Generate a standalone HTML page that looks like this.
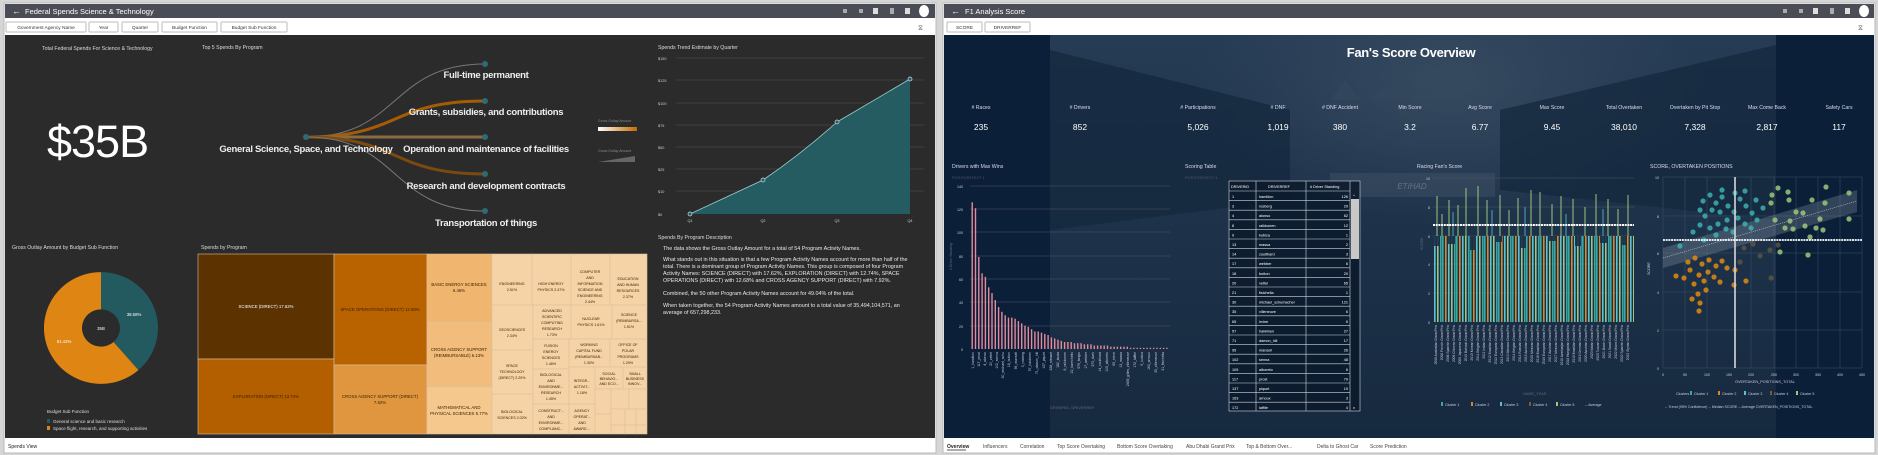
<!DOCTYPE html>
<html><head><meta charset="utf-8"><style>
html,body{margin:0;padding:0;background:#d6d6d6;}
svg{display:block;font-family:"Liberation Sans",sans-serif;}
</style></head><body>
<svg width="1878" height="455" viewBox="0 0 1878 455" xmlns="http://www.w3.org/2000/svg">
<defs>
<linearGradient id="og" x1="0" x2="1"><stop offset="0" stop-color="#fff"/><stop offset="1" stop-color="#c66a00"/></linearGradient>
<linearGradient id="photo" x1="0" x2="0" y1="0" y2="1"><stop offset="0" stop-color="#263c55"/><stop offset="0.35" stop-color="#1f344c"/><stop offset="1" stop-color="#16293f"/></linearGradient>
<radialGradient id="sky" cx="0.55" cy="0.12" r="0.35"><stop offset="0" stop-color="#3a4d62" stop-opacity="0.8"/><stop offset="1" stop-color="#3a4d62" stop-opacity="0"/></radialGradient>
<pattern id="stripes" width="14" height="10" patternUnits="userSpaceOnUse">
<rect x="0" y="0" width="1.6" height="10" fill="#3aa7a7"/><rect x="3" y="0" width="1.6" height="10" fill="#d9891e"/><rect x="6" y="0" width="1.6" height="10" fill="#5cc2d2"/><rect x="9" y="0" width="1.6" height="10" fill="#9bc77b"/><rect x="12" y="0" width="1.6" height="10" fill="#3aa7a7"/>
</pattern>
</defs>
<rect width="1878" height="455" fill="#d6d6d6"/>
<!-- LEFT PANEL -->
<rect x="4" y="3" width="932" height="450" fill="#fff" stroke="#bbb"/>
<rect x="5" y="4" width="930" height="14" fill="#4a4d55"/>
<text x="12" y="14" font-size="9" fill="#fff">←</text>
<text x="25" y="14" font-size="7.5" fill="#fff">Federal Spends Science &amp; Technology</text>
<g fill="#aaa"><rect x="843" y="9" width="4" height="4"/><rect x="859" y="9" width="4" height="4"/><rect x="873" y="8" width="5" height="6" fill="#ddd"/><rect x="890" y="8" width="4" height="6"/><rect x="905" y="8" width="5" height="6" fill="#ddd"/></g>
<ellipse cx="924" cy="11" rx="5" ry="6" fill="#fff"/>
<g font-size="4.8" fill="#333" text-anchor="middle">
<rect x="6" y="22" width="80" height="10" fill="#fff" stroke="#bbb" rx="1"/><text x="46" y="29">Government Agency Name</text>
<rect x="89" y="22" width="29" height="10" fill="#fff" stroke="#bbb" rx="1"/><text x="103.5" y="29">Year</text>
<rect x="122" y="22" width="36" height="10" fill="#fff" stroke="#bbb" rx="1"/><text x="140" y="29">Quarter</text>
<rect x="162" y="22" width="55" height="10" fill="#fff" stroke="#bbb" rx="1"/><text x="189.5" y="29">Budget Function</text>
<rect x="221" y="22" width="66" height="10" fill="#fff" stroke="#bbb" rx="1"/><text x="254" y="29">Budget Sub Function</text>
</g>
<text x="918" y="30" font-size="7" fill="#666">⧖</text>
<rect x="5" y="35" width="930" height="403" fill="#2b2b2b"/>
<g font-size="5.2" fill="#ddd">
<text x="42" y="50">Total Federal Spends For Science &amp; Technology</text>
<text x="202" y="49">Top 5 Spends By Program</text>
<text x="658" y="49">Spends Trend Estimate by Quarter</text>
</g>
<text x="47" y="157" font-size="45" fill="#fff" font-weight="300" letter-spacing="-1">$35B</text>
<!-- sankey -->
<g fill="none" stroke-linecap="round">
<path d="M306 137 C400 137 390 64 485 64" stroke="#777" stroke-width="1"/>
<path d="M306 137 C400 137 390 101 485 101" stroke="#a65c05" stroke-width="3"/>
<path d="M306 137 L485 137" stroke="#8a6a40" stroke-width="3"/>
<path d="M306 137 C400 137 390 174 485 174" stroke="#7a4a10" stroke-width="3"/>
<path d="M306 137 C400 137 390 211 485 211" stroke="#777" stroke-width="1"/>
</g>
<g fill="#2e6b73"><circle cx="306" cy="137" r="3"/><circle cx="485" cy="64" r="3"/><circle cx="485" cy="101" r="3"/><circle cx="485" cy="137" r="3"/><circle cx="485" cy="174" r="3"/><circle cx="485" cy="211" r="3"/></g>
<g font-size="9.5" font-weight="bold" fill="#eee" text-anchor="middle" letter-spacing="-0.3">
<text x="486" y="78">Full-time permanent</text>
<text x="486" y="115">Grants, subsidies, and contributions</text>
<text x="306" y="152">General Science, Space, and Technology</text>
<text x="486" y="152">Operation and maintenance of facilities</text>
<text x="486" y="189">Research and development contracts</text>
<text x="486" y="226">Transportation of things</text>
</g>
<g font-size="3.5" fill="#888"><text x="598" y="122">Gross Outlay Amount</text><text x="598" y="152">Gross Outlay Amount</text></g>
<rect x="598" y="127" width="39" height="4" fill="url(#og)"/>
<path d="M598 162 L635 156 L635 162 Z" fill="#666"/>
<!-- trend chart -->
<g stroke="#555" stroke-width="0.6"><line x1="676" y1="58" x2="924" y2="58"/><line x1="676" y1="80" x2="924" y2="80"/><line x1="676" y1="103" x2="924" y2="103"/><line x1="676" y1="125" x2="924" y2="125"/><line x1="676" y1="147" x2="924" y2="147"/><line x1="676" y1="169" x2="924" y2="169"/><line x1="676" y1="191" x2="924" y2="191"/></g>
<g font-size="3.8" fill="#ccc"><text x="658" y="60">$150</text><text x="658" y="82">$125</text><text x="658" y="105">$100</text><text x="658" y="127">$75</text><text x="658" y="149">$50</text><text x="658" y="171">$25</text><text x="658" y="193">$10</text><text x="658" y="216">$0</text></g>
<path d="M690 214 L763 180 Q800 155 837 122 L910 79 L910 214 Z" fill="#255c62"/>
<path d="M690 214 L763 180 Q800 155 837 122 L910 79" fill="none" stroke="#9cc" stroke-width="0.8"/>
<g fill="#255c62" stroke="#cde" stroke-width="0.7"><circle cx="690" cy="214" r="2"/><circle cx="763" cy="180" r="2"/><circle cx="837" cy="122" r="2"/><circle cx="910" cy="79" r="2"/></g>
<g font-size="3.8" fill="#ccc" text-anchor="middle"><text x="690" y="222">Q1</text><text x="763" y="222">Q2</text><text x="837" y="222">Q3</text><text x="910" y="222">Q4</text></g>
<!-- donut -->
<text x="12" y="249" font-size="5.2" fill="#ddd">Gross Outlay Amount by Budget Sub Function</text>
<text x="201" y="249" font-size="5.2" fill="#ddd">Spends by Program</text>
<text x="658" y="239" font-size="5.2" fill="#ddd">Spends By Program Description</text>
<g transform="translate(101,328) scale(1,0.98)">
<path d="M0 -57 A57 57 0 0 1 37.4 43 L12.5 14.3 A19 19 0 0 0 0 -19 Z" fill="#235a60"/>
<path d="M37.4 43 A57 57 0 1 1 0 -57 L0 -19 A19 19 0 1 0 12.5 14.3 Z" fill="#df8514"/>
</g>
<g font-size="4.3" fill="#fff" text-anchor="middle"><text x="134" y="316">38.58%</text><text x="64" y="343">61.42%</text><text x="101" y="330">35B</text></g>
<text x="47" y="413" font-size="4.5" fill="#ddd">Budget Sub Function</text>
<rect x="47" y="419" width="3" height="4" fill="#235a60"/><text x="53" y="423" font-size="4.5" fill="#ddd">General science and basic research</text>
<rect x="47" y="426" width="3" height="4" fill="#df8514"/><text x="53" y="430" font-size="4.5" fill="#ddd">Space flight, research, and supporting activities</text>
<!-- treemap -->
<g stroke="#d9c0a0" stroke-width="0.6">
<rect x="198" y="254" width="136" height="105" fill="#5c3200"/>
<rect x="198" y="359" width="136" height="75" fill="#b35f00"/>
<rect x="334" y="254" width="93" height="111" fill="#b86200"/>
<rect x="334" y="365" width="93" height="69" fill="#e0963f"/>
<rect x="427" y="254" width="65" height="68" fill="#f0b56e"/>
<rect x="427" y="322" width="65" height="65" fill="#f2bd7c"/>
<rect x="427" y="387" width="65" height="47" fill="#f5c88e"/>
<g fill="#f6d3a6">
<rect x="492" y="254" width="40" height="51"/><rect x="532" y="254" width="39" height="51"/><rect x="571" y="254" width="39" height="51"/><rect x="610" y="254" width="37" height="51"/>
<rect x="492" y="305" width="41" height="45"/><rect x="492" y="350" width="41" height="44"/><rect x="492" y="394" width="41" height="40"/>
<rect x="533" y="305" width="38" height="34"/><rect x="571" y="305" width="41" height="34"/><rect x="612" y="305" width="35" height="34"/>
<rect x="533" y="339" width="36" height="30"/><rect x="569" y="339" width="41" height="28"/><rect x="610" y="339" width="37" height="28"/>
<rect x="533" y="369" width="36" height="35"/><rect x="533" y="404" width="36" height="30"/>
<rect x="569" y="367" width="26" height="37"/><rect x="569" y="404" width="26" height="30"/>
<rect x="595" y="367" width="28" height="22"/><rect x="623" y="367" width="24" height="22"/>
<rect x="595" y="389" width="16" height="25"/><rect x="611" y="389" width="18" height="20"/><rect x="629" y="389" width="18" height="20"/>
<rect x="595" y="414" width="16" height="20"/><rect x="611" y="409" width="14" height="16"/><rect x="625" y="409" width="11" height="16"/><rect x="636" y="409" width="11" height="16"/>
<rect x="611" y="425" width="14" height="9"/><rect x="625" y="425" width="11" height="9"/><rect x="636" y="425" width="11" height="9"/>
</g>
</g>
<g font-size="4.3" fill="#3a2200" text-anchor="middle">
<text x="266" y="308" fill="#fff">SCIENCE (DIRECT) 17.62%</text>
<text x="266" y="398" fill="#3a1d00">EXPLORATION (DIRECT) 12.74%</text>
<text x="380" y="311">SPACE OPERATIONS (DIRECT) 12.68%</text>
<text x="380" y="398">CROSS AGENCY SUPPORT (DIRECT)</text><text x="380" y="404">7.92%</text>
<text x="459" y="286">BASIC ENERGY SCIENCES</text><text x="459" y="292">6.46%</text>
<text x="459" y="351">CROSS AGENCY SUPPORT</text><text x="459" y="357">(REIMBURSABLE) 6.13%</text>
<text x="459" y="409">MATHEMATICAL AND</text><text x="459" y="415">PHYSICAL SCIENCES 5.77%</text>
</g>
<g font-size="3.6" fill="#3a2200" text-anchor="middle">
<text x="512" y="285">ENGINEERING</text><text x="512" y="291">2.51%</text>
<text x="551" y="285">HIGH ENERGY</text><text x="551" y="291">PHYSICS 2.47%</text>
<text x="590" y="273">COMPUTER</text><text x="590" y="279">AND</text><text x="590" y="285">INFORMATION</text><text x="590" y="291">SCIENCE AND</text><text x="590" y="297">ENGINEERING</text><text x="590" y="303">2.44%</text>
<text x="628" y="280">EDUCATION</text><text x="628" y="286">AND HUMAN</text><text x="628" y="292">RESOURCES</text><text x="628" y="298">2.37%</text>
<text x="512" y="331">GEOSCIENCES</text><text x="512" y="337">2.34%</text>
<text x="512" y="367">SPACE</text><text x="512" y="373">TECHNOLOGY</text><text x="512" y="379">(DIRECT) 2.29%</text>
<text x="512" y="413">BIOLOGICAL</text><text x="512" y="419">SCIENCES 2.02%</text>
<text x="552" y="312">ADVANCED</text><text x="552" y="318">SCIENTIFIC</text><text x="552" y="324">COMPUTING</text><text x="552" y="330">RESEARCH</text><text x="552" y="336">1.73%</text>
<text x="591" y="320">NUCLEAR</text><text x="591" y="326">PHYSICS 1.61%</text>
<text x="629" y="316">SCIENCE</text><text x="629" y="322">(REIMBURSA...</text><text x="629" y="328">1.51%</text>
<text x="551" y="347">FUSION</text><text x="551" y="353">ENERGY</text><text x="551" y="359">SCIENCES</text><text x="551" y="365">1.46%</text>
<text x="589" y="346">WORKING</text><text x="589" y="352">CAPITAL FUND</text><text x="589" y="358">(REIMBURSAB...</text><text x="589" y="364">1.30%</text>
<text x="628" y="346">OFFICE OF</text><text x="628" y="352">POLAR</text><text x="628" y="358">PROGRAMS</text><text x="628" y="364">1.29%</text>
<text x="551" y="376">BIOLOGICAL</text><text x="551" y="382">AND</text><text x="551" y="388">ENVIRONME...</text><text x="551" y="394">RESEARCH</text><text x="551" y="400">1.45%</text>
<text x="551" y="412">CONSTRUCT...</text><text x="551" y="418">AND</text><text x="551" y="424">ENVIRONME...</text><text x="551" y="430">COMPLIANC...</text>
<text x="582" y="382">INTEGR...</text><text x="582" y="388">ACTIVIT...</text><text x="582" y="394">1.18%</text>
<text x="582" y="412">AGENCY</text><text x="582" y="418">OPERAT...</text><text x="582" y="424">AND</text><text x="582" y="430">AWARD ...</text>
<text x="609" y="375">SOCIAL</text><text x="609" y="380">BEHAVIO...</text><text x="609" y="385">AND ECO...</text>
<text x="635" y="375">SMALL</text><text x="635" y="380">BUSINESS</text><text x="635" y="385">INNOV...</text>
</g>
<g font-size="5.4" fill="#e8e8e8">
<text x="663" y="250">The data shows the Gross Outlay Amount for a total of 54 Program Activity Names.</text>
<text x="663" y="261">What stands out in this situation is that a few Program Activity Names account for more than half of the</text>
<text x="663" y="268">total. There is a dominant group of Program Activity Names. This group is composed of four Program</text>
<text x="663" y="275">Activity Names: SCIENCE (DIRECT) with 17.62%, EXPLORATION (DIRECT) with 12.74%, SPACE</text>
<text x="663" y="282">OPERATIONS (DIRECT) with 12.68% and CROSS AGENCY SUPPORT (DIRECT) with 7.92%.</text>
<text x="663" y="295">Combined, the 50 other Program Activity Names account for 49.04% of the total.</text>
<text x="663" y="307">When taken together, the 54 Program Activity Names amount to a total value of 35,494,104,571, an</text>
<text x="663" y="314">average of 657,298,233.</text>
</g>
<rect x="5" y="439" width="930" height="13" fill="#fff"/>
<text x="8" y="448" font-size="5" fill="#222">Spends View</text>

<!-- RIGHT PANEL -->
<rect x="943" y="3" width="932" height="450" fill="#fff" stroke="#bbb"/>
<rect x="944" y="4" width="930" height="14" fill="#4a4d55"/>
<text x="951" y="14" font-size="9" fill="#fff">←</text>
<text x="965" y="14" font-size="7.5" fill="#fff">F1 Analysis Score</text>
<g fill="#aaa"><rect x="1783" y="9" width="4" height="4"/><rect x="1799" y="9" width="4" height="4"/><rect x="1813" y="8" width="5" height="6" fill="#ddd"/><rect x="1830" y="8" width="4" height="6"/><rect x="1845" y="8" width="5" height="6" fill="#ddd"/></g>
<ellipse cx="1864" cy="11" rx="5" ry="6" fill="#fff"/>
<g font-size="4.8" fill="#333" text-anchor="middle">
<rect x="947" y="22" width="35" height="10" fill="#fff" stroke="#bbb" rx="1"/><text x="964.5" y="29">SCORE</text>
<rect x="985" y="22" width="45" height="10" fill="#fff" stroke="#bbb" rx="1"/><text x="1007.5" y="29">DRIVERREF</text>
</g>
<text x="1858" y="30" font-size="7" fill="#666">⧖</text>
<rect x="944" y="35" width="930" height="403" fill="#0b1f38"/>
<rect x="1050" y="35" width="726" height="403" fill="url(#photo)"/>
<rect x="1050" y="35" width="726" height="403" fill="url(#sky)"/>
<path d="M1050 50 L1290 110 L1290 200 L1050 230 Z" fill="#13263c" opacity="0.7"/>
<path d="M1776 45 L1500 110 L1500 190 L1776 220 Z" fill="#13263c" opacity="0.7"/>
<path d="M1330 100 L1345 80 L1360 100 Z M1370 100 L1385 85 L1400 100 Z M1410 100 L1425 84 L1440 100 Z" fill="#33485e" opacity="0.7"/>
<rect x="1330" y="173" width="165" height="24" fill="#4a5d70" opacity="0.35"/>
<text x="1412" y="189" font-size="8" fill="#8090a0" text-anchor="middle" font-style="italic" opacity="0.6">ETIHAD</text>
<text x="1411" y="57" font-size="13" font-weight="bold" fill="#fff" text-anchor="middle" letter-spacing="-0.3">Fan's Score Overview</text>
<g font-size="5.2" fill="#dde" text-anchor="middle">
<text x="981" y="109"># Races</text><text x="1080" y="109"># Drivers</text><text x="1198" y="109"># Participations</text><text x="1278" y="109"># DNF</text><text x="1340" y="109"># DNF Accident</text><text x="1410" y="109">Min Score</text><text x="1480" y="109">Avg Score</text><text x="1552" y="109">Max Score</text><text x="1624" y="109">Total Overtaken</text><text x="1695" y="109">Overtaken by Pit Stop</text><text x="1767" y="109">Max Come Back</text><text x="1839" y="109">Safety Cars</text>
</g>
<g font-size="8.5" fill="#fff" text-anchor="middle">
<text x="981" y="130">235</text><text x="1080" y="130">852</text><text x="1198" y="130">5,026</text><text x="1278" y="130">1,019</text><text x="1340" y="130">380</text><text x="1410" y="130">3.2</text><text x="1480" y="130">6.77</text><text x="1552" y="130">9.45</text><text x="1624" y="130">38,010</text><text x="1695" y="130">7,328</text><text x="1767" y="130">2,817</text><text x="1839" y="130">117</text>
</g>
<g font-size="5.2" fill="#dde">
<text x="952" y="168">Drivers with Max Wins</text><text x="1185" y="168">Scoring Table</text><text x="1417" y="168">Racing Fan's Score</text><text x="1650" y="168">SCORE, OVERTAKEN POSITIONS</text>
</g>
<g font-size="4" fill="#556"><text x="952" y="179">POSITIONTEXT 1</text><text x="1185" y="179">POSITIONTEXT 1</text></g>
<!-- bar chart 1 -->
<g stroke="#556" stroke-width="0.5"><line x1="970" y1="186" x2="1170" y2="186"/><line x1="970" y1="209" x2="1170" y2="209"/><line x1="970" y1="232" x2="1170" y2="232"/><line x1="970" y1="256" x2="1170" y2="256"/><line x1="970" y1="279" x2="1170" y2="279"/><line x1="970" y1="302" x2="1170" y2="302"/><line x1="970" y1="326" x2="1170" y2="326"/></g>
<g font-size="3.6" fill="#ccd"><text x="957" y="188">140</text><text x="957" y="211">120</text><text x="957" y="234">100</text><text x="959" y="258">80</text><text x="959" y="281">60</text><text x="959" y="304">40</text><text x="959" y="328">20</text><text x="961" y="351">0</text></g>
<text x="952" y="270" font-size="3.5" fill="#667" transform="rotate(-90 952 270)"># Driver Standing</text>
<g fill="#e58a9c">
<rect x="971.5" y="202.3" width="1.4" height="146.7"/><rect x="974.8" y="208.2" width="1.4" height="140.8"/><rect x="978.1" y="257" width="1.4" height="92"/><rect x="981.4" y="273.3" width="1.4" height="75.7"/><rect x="984.7" y="276.8" width="1.4" height="72.2"/><rect x="988" y="287.3" width="1.4" height="61.7"/><rect x="991.3" y="293.1" width="1.4" height="55.9"/><rect x="994.6" y="300.1" width="1.4" height="48.9"/><rect x="997.9" y="307.1" width="1.4" height="41.9"/><rect x="1001.2" y="311.8" width="1.4" height="37.2"/><rect x="1004.5" y="315.2" width="1.4" height="33.8"/><rect x="1007.8" y="317.6" width="1.4" height="31.4"/><rect x="1011.1" y="317.6" width="1.4" height="31.4"/><rect x="1014.4" y="318.7" width="1.4" height="30.3"/><rect x="1017.7" y="321.1" width="1.4" height="27.9"/><rect x="1021" y="323.4" width="1.4" height="25.6"/><rect x="1024.3" y="325.7" width="1.4" height="23.3"/><rect x="1027.6" y="326.9" width="1.4" height="22.1"/><rect x="1030.9" y="329.2" width="1.4" height="19.8"/><rect x="1034.2" y="331.5" width="1.4" height="17.5"/><rect x="1037.5" y="331.5" width="1.4" height="17.5"/><rect x="1040.8" y="332.7" width="1.4" height="16.3"/><rect x="1044.1" y="333.9" width="1.4" height="15.1"/><rect x="1047.4" y="335" width="1.4" height="14"/><rect x="1050.7" y="337.4" width="1.4" height="11.6"/><rect x="1054" y="338.5" width="1.4" height="10.5"/><rect x="1057.3" y="339.7" width="1.4" height="9.3"/><rect x="1060.6" y="340.9" width="1.4" height="8.1"/><rect x="1063.9" y="342" width="1.4" height="7"/><rect x="1067.2" y="342" width="1.4" height="7"/><rect x="1070.5" y="342" width="1.4" height="7"/><rect x="1073.8" y="343.2" width="1.4" height="5.8"/><rect x="1077.1" y="343.2" width="1.4" height="5.8"/><rect x="1080.4" y="343.2" width="1.4" height="5.8"/><rect x="1083.7" y="344.3" width="1.4" height="4.7"/><rect x="1087" y="344.3" width="1.4" height="4.7"/><rect x="1090.3" y="344.3" width="1.4" height="4.7"/><rect x="1093.6" y="345.5" width="1.4" height="3.5"/><rect x="1096.9" y="345.5" width="1.4" height="3.5"/><rect x="1100.2" y="345.5" width="1.4" height="3.5"/><rect x="1103.5" y="345.5" width="1.4" height="3.5"/><rect x="1106.8" y="345.5" width="1.4" height="3.5"/><rect x="1110.1" y="346.7" width="1.4" height="2.3"/><rect x="1113.4" y="346.7" width="1.4" height="2.3"/><rect x="1116.7" y="346.7" width="1.4" height="2.3"/><rect x="1120" y="346.7" width="1.4" height="2.3"/><rect x="1123.3" y="346.7" width="1.4" height="2.3"/><rect x="1126.6" y="346.7" width="1.4" height="2.3"/><rect x="1129.9" y="347.8" width="1.4" height="1.2"/><rect x="1133.2" y="347.8" width="1.4" height="1.2"/><rect x="1136.5" y="347.8" width="1.4" height="1.2"/><rect x="1139.8" y="347.8" width="1.4" height="1.2"/><rect x="1143.1" y="347.8" width="1.4" height="1.2"/><rect x="1146.4" y="347.8" width="1.4" height="1.2"/><rect x="1149.7" y="347.8" width="1.4" height="1.2"/><rect x="1153" y="347.8" width="1.4" height="1.2"/><rect x="1156.3" y="347.8" width="1.4" height="1.2"/><rect x="1159.6" y="347.8" width="1.4" height="1.2"/><rect x="1162.9" y="347.8" width="1.4" height="1.2"/><rect x="1166.2" y="347.8" width="1.4" height="1.2"/>
</g>
<g font-size="3.4" fill="#ccd" text-anchor="end">
<text transform="translate(974,352) rotate(-90)">1_hamilton</text><text transform="translate(980,352) rotate(-90)">117_prost</text><text transform="translate(986,352) rotate(-90)">4_alonso</text><text transform="translate(992,352) rotate(-90)">20_vettel</text><text transform="translate(998,352) rotate(-90)">102_senna</text><text transform="translate(1004,352) rotate(-90)">30_michael_schu</text><text transform="translate(1010,352) rotate(-90)">18_button</text><text transform="translate(1017,352) rotate(-90)">95_mansell</text><text transform="translate(1024,352) rotate(-90)">3_rosberg</text><text transform="translate(1031,352) rotate(-90)">57_hakkinen</text><text transform="translate(1038,352) rotate(-90)">71_damon_hill</text><text transform="translate(1045,352) rotate(-90)">137_piquet</text><text transform="translate(1052,352) rotate(-90)">328_stewart</text><text transform="translate(1059,352) rotate(-90)">182_lauda</text><text transform="translate(1066,352) rotate(-90)">8_raikkonen</text><text transform="translate(1073,352) rotate(-90)">22_barrichello</text><text transform="translate(1080,352) rotate(-90)">579_fangio</text><text transform="translate(1087,352) rotate(-90)">17_webber</text><text transform="translate(1094,352) rotate(-90)">373_clark</text><text transform="translate(1101,352) rotate(-90)">14_coulthard</text><text transform="translate(1108,352) rotate(-90)">105_alboreto</text><text transform="translate(1115,352) rotate(-90)">65_irvine</text><text transform="translate(1122,352) rotate(-90)">13_massa</text><text transform="translate(1129,352) rotate(-90)">2439_gilles_villeneuve</text><text transform="translate(1136,352) rotate(-90)">172_laffite</text><text transform="translate(1143,352) rotate(-90)">9_kubica</text><text transform="translate(1150,352) rotate(-90)">163_arnoux</text><text transform="translate(1157,352) rotate(-90)">35_villeneuve</text><text transform="translate(1164,352) rotate(-90)">31_fisichella</text>
</g>
<text x="1050" y="409" font-size="4" fill="#667">DRIVERID, DRIVERREF</text>
<!-- table -->
<rect x="1229" y="181" width="131" height="230" fill="#0b1a2c" opacity="0.85"/>
<g stroke="#cfd6de" stroke-width="0.6" fill="none">
<rect x="1229" y="181" width="131" height="230"/>
<line x1="1256" y1="181" x2="1256" y2="411"/><line x1="1306" y1="181" x2="1306" y2="411"/><line x1="1350" y1="181" x2="1350" y2="411"/>
<line x1="1229" y1="191" x2="1350" y2="191"/><line x1="1229" y1="200.6" x2="1350" y2="200.6"/><line x1="1229" y1="210.2" x2="1350" y2="210.2"/><line x1="1229" y1="219.8" x2="1350" y2="219.8"/><line x1="1229" y1="229.4" x2="1350" y2="229.4"/><line x1="1229" y1="239" x2="1350" y2="239"/><line x1="1229" y1="248.6" x2="1350" y2="248.6"/><line x1="1229" y1="258.2" x2="1350" y2="258.2"/><line x1="1229" y1="267.8" x2="1350" y2="267.8"/><line x1="1229" y1="277.4" x2="1350" y2="277.4"/><line x1="1229" y1="287" x2="1350" y2="287"/><line x1="1229" y1="296.6" x2="1350" y2="296.6"/><line x1="1229" y1="306.2" x2="1350" y2="306.2"/><line x1="1229" y1="315.8" x2="1350" y2="315.8"/><line x1="1229" y1="325.4" x2="1350" y2="325.4"/><line x1="1229" y1="335" x2="1350" y2="335"/><line x1="1229" y1="344.6" x2="1350" y2="344.6"/><line x1="1229" y1="354.2" x2="1350" y2="354.2"/><line x1="1229" y1="363.8" x2="1350" y2="363.8"/><line x1="1229" y1="373.4" x2="1350" y2="373.4"/><line x1="1229" y1="383" x2="1350" y2="383"/><line x1="1229" y1="392.6" x2="1350" y2="392.6"/><line x1="1229" y1="402.2" x2="1350" y2="402.2"/>
</g>
<rect x="1351" y="199" width="8" height="60" fill="#c8c8c8"/>
<g font-size="3.8" fill="#fff"><text x="1231" y="188">DRIVERID</text><text x="1268" y="188">DRIVERREF</text><text x="1310" y="188"># Driver Standing</text><text x="1353" y="197" font-size="4">^</text><text x="1353" y="409" font-size="4">v</text></g>
<g font-size="3.8" fill="#fff">
<text x="1232" y="198">1</text><text x="1232" y="207.6">3</text><text x="1232" y="217.2">4</text><text x="1232" y="226.8">8</text><text x="1232" y="236.4">9</text><text x="1232" y="246">13</text><text x="1232" y="255.6">14</text><text x="1232" y="265.2">17</text><text x="1232" y="274.8">18</text><text x="1232" y="284.4">20</text><text x="1232" y="294">21</text><text x="1232" y="303.6">30</text><text x="1232" y="313.2">35</text><text x="1232" y="322.8">65</text><text x="1232" y="332.4">57</text><text x="1232" y="342">71</text><text x="1232" y="351.6">95</text><text x="1232" y="361.2">102</text><text x="1232" y="370.8">105</text><text x="1232" y="380.4">117</text><text x="1232" y="390">137</text><text x="1232" y="399.6">163</text><text x="1232" y="409.2">172</text>
<text x="1259" y="198">hamilton</text><text x="1259" y="207.6">rosberg</text><text x="1259" y="217.2">alonso</text><text x="1259" y="226.8">raikkonen</text><text x="1259" y="236.4">kubica</text><text x="1259" y="246">massa</text><text x="1259" y="255.6">coulthard</text><text x="1259" y="265.2">webber</text><text x="1259" y="274.8">button</text><text x="1259" y="284.4">vettel</text><text x="1259" y="294">fisichella</text><text x="1259" y="303.6">michael_schumacher</text><text x="1259" y="313.2">villeneuve</text><text x="1259" y="322.8">irvine</text><text x="1259" y="332.4">hakkinen</text><text x="1259" y="342">damon_hill</text><text x="1259" y="351.6">mansell</text><text x="1259" y="361.2">senna</text><text x="1259" y="370.8">alboreto</text><text x="1259" y="380.4">prost</text><text x="1259" y="390">piquet</text><text x="1259" y="399.6">arnoux</text><text x="1259" y="409.2">laffite</text>
</g>
<g font-size="3.8" fill="#fff" text-anchor="end">
<text x="1348" y="198">126</text><text x="1348" y="207.6">29</text><text x="1348" y="217.2">62</text><text x="1348" y="226.8">12</text><text x="1348" y="236.4">1</text><text x="1348" y="246">2</text><text x="1348" y="255.6">3</text><text x="1348" y="265.2">6</text><text x="1348" y="274.8">20</text><text x="1348" y="284.4">65</text><text x="1348" y="294">1</text><text x="1348" y="303.6">121</text><text x="1348" y="313.2">6</text><text x="1348" y="322.8">6</text><text x="1348" y="332.4">27</text><text x="1348" y="342">17</text><text x="1348" y="351.6">26</text><text x="1348" y="361.2">48</text><text x="1348" y="370.8">6</text><text x="1348" y="380.4">79</text><text x="1348" y="390">19</text><text x="1348" y="399.6">3</text><text x="1348" y="409.2">4</text>
</g>
<!-- racing fan's score -->
<g stroke="#556" stroke-width="0.5"><line x1="1433" y1="178" x2="1634" y2="178"/><line x1="1433" y1="207" x2="1634" y2="207"/><line x1="1433" y1="236" x2="1634" y2="236"/><line x1="1433" y1="264" x2="1634" y2="264"/><line x1="1433" y1="293" x2="1634" y2="293"/></g>
<g font-size="3.6" fill="#ccd"><text x="1426" y="180">10</text><text x="1428" y="209">8</text><text x="1428" y="238">6</text><text x="1428" y="266">4</text><text x="1428" y="295">2</text><text x="1428" y="324">0</text></g>
<rect x="1434" y="236" width="200" height="86" fill="url(#stripes)"/>
<g fill="#1a2f47" opacity="0.9"><rect x="1434" y="236" width="6" height="10"/><rect x="1447" y="236" width="8" height="8"/><rect x="1470" y="236" width="5" height="14"/><rect x="1495" y="236" width="7" height="6"/><rect x="1520" y="236" width="6" height="12"/><rect x="1548" y="236" width="9" height="5"/><rect x="1575" y="236" width="6" height="10"/><rect x="1600" y="236" width="8" height="7"/><rect x="1622" y="236" width="5" height="9"/></g>
<g stroke="#9bc77b" stroke-width="1"><line x1="1437" y1="236" x2="1437" y2="196"/><line x1="1442" y1="236" x2="1442" y2="214"/><line x1="1449" y1="236" x2="1449" y2="200"/><line x1="1458" y1="236" x2="1458" y2="205"/><line x1="1466" y1="236" x2="1466" y2="188"/><line x1="1478" y1="236" x2="1478" y2="186"/><line x1="1487" y1="236" x2="1487" y2="200"/><line x1="1500" y1="236" x2="1500" y2="195"/><line x1="1509" y1="236" x2="1509" y2="210"/><line x1="1518" y1="236" x2="1518" y2="198"/><line x1="1531" y1="236" x2="1531" y2="190"/><line x1="1540" y1="236" x2="1540" y2="192"/><line x1="1552" y1="236" x2="1552" y2="204"/><line x1="1561" y1="236" x2="1561" y2="196"/><line x1="1573" y1="236" x2="1573" y2="199"/><line x1="1585" y1="236" x2="1585" y2="207"/><line x1="1596" y1="236" x2="1596" y2="194"/><line x1="1608" y1="236" x2="1608" y2="199"/><line x1="1618" y1="236" x2="1618" y2="209"/><line x1="1628" y1="236" x2="1628" y2="195"/></g>
<g stroke="#5cc2d2" stroke-width="0.8"><line x1="1453" y1="236" x2="1453" y2="212"/><line x1="1492" y1="236" x2="1492" y2="210"/><line x1="1525" y1="236" x2="1525" y2="207"/><line x1="1566" y1="236" x2="1566" y2="214"/><line x1="1603" y1="236" x2="1603" y2="209"/></g>
<line x1="1433" y1="225" x2="1634" y2="225" stroke="#fff" stroke-width="2" stroke-dasharray="2 0.7"/>
<text x="1423" y="250" font-size="3.5" fill="#667" transform="rotate(-90 1423 250)">SCORE</text>
<g font-size="3.3" fill="#ccd" text-anchor="end">
<text transform="translate(1437,325) rotate(-90)">2008 Australian Grand Prix</text><text transform="translate(1443,325) rotate(-90)">2008 French Grand Prix</text><text transform="translate(1449,325) rotate(-90)">2008 Spanish Grand Prix</text><text transform="translate(1455,325) rotate(-90)">2009 Chinese Grand Prix</text><text transform="translate(1461,325) rotate(-90)">2009 Japanese Grand Prix</text><text transform="translate(1467,325) rotate(-90)">2010 Bahrain Grand Prix</text><text transform="translate(1473,325) rotate(-90)">2010 Korean Grand Prix</text><text transform="translate(1479,325) rotate(-90)">2011 Belgian Grand Prix</text><text transform="translate(1485,325) rotate(-90)">2011 Indian Grand Prix</text><text transform="translate(1491,325) rotate(-90)">2012 Brazilian Grand Prix</text><text transform="translate(1497,325) rotate(-90)">2012 European Grand Prix</text><text transform="translate(1503,325) rotate(-90)">2013 Canadian Grand Prix</text><text transform="translate(1509,325) rotate(-90)">2013 Monaco Grand Prix</text><text transform="translate(1515,325) rotate(-90)">2014 Belgian Grand Prix</text><text transform="translate(1521,325) rotate(-90)">2014 Russian Grand Prix</text><text transform="translate(1527,325) rotate(-90)">2015 Austrian Grand Prix</text><text transform="translate(1533,325) rotate(-90)">2015 Mexican Grand Prix</text><text transform="translate(1539,325) rotate(-90)">2016 Brazilian Grand Prix</text><text transform="translate(1545,325) rotate(-90)">2016 European Grand Prix</text><text transform="translate(1551,325) rotate(-90)">2017 Austrian Grand Prix</text><text transform="translate(1557,325) rotate(-90)">2017 Mexican Grand Prix</text><text transform="translate(1563,325) rotate(-90)">2018 Azerbaijan Grand Prix</text><text transform="translate(1569,325) rotate(-90)">2018 Hungarian Grand Prix</text><text transform="translate(1575,325) rotate(-90)">2019 Brazilian Grand Prix</text><text transform="translate(1581,325) rotate(-90)">2019 German Grand Prix</text><text transform="translate(1587,325) rotate(-90)">2020 Austrian Grand Prix</text><text transform="translate(1593,325) rotate(-90)">2020 Italian Grand Prix</text><text transform="translate(1599,325) rotate(-90)">2020 Tuscan Grand Prix</text><text transform="translate(1605,325) rotate(-90)">2021 Dutch Grand Prix</text><text transform="translate(1611,325) rotate(-90)">2021 Saudi Grand Prix</text><text transform="translate(1617,325) rotate(-90)">2022 Miami Grand Prix</text><text transform="translate(1623,325) rotate(-90)">2022 Spanish Grand Prix</text><text transform="translate(1629,325) rotate(-90)">2022 Styrian Grand Prix</text>
</g>
<text x="1523" y="395" font-size="3.8" fill="#667">NAME_YEAR</text>
<g font-size="3.6" fill="#ccd">
<rect x="1441" y="402" width="2" height="4" fill="#3aa7a7"/><text x="1445" y="406">Cluster 1</text>
<rect x="1471" y="402" width="2" height="4" fill="#d9891e"/><text x="1475" y="406">Cluster 2</text>
<rect x="1500" y="402" width="2" height="4" fill="#5cc2d2"/><text x="1504" y="406">Cluster 3</text>
<rect x="1529" y="402" width="2" height="4" fill="#7a5a3a"/><text x="1533" y="406">Cluster 4</text>
<rect x="1556" y="402" width="2" height="4" fill="#9bc77b"/><text x="1560" y="406">Cluster 5</text>
<text x="1585" y="406">-- Average</text>
</g>
<!-- scatter -->
<g stroke="#3d5168" stroke-width="0.5">
<line x1="1663" y1="177" x2="1862" y2="177"/><line x1="1663" y1="216" x2="1862" y2="216"/><line x1="1663" y1="253" x2="1862" y2="253"/><line x1="1663" y1="292" x2="1862" y2="292"/><line x1="1663" y1="330" x2="1862" y2="330"/><line x1="1663" y1="368" x2="1862" y2="368"/>
<line x1="1663" y1="177" x2="1663" y2="368"/><line x1="1685" y1="177" x2="1685" y2="368"/><line x1="1707" y1="177" x2="1707" y2="368"/><line x1="1751" y1="177" x2="1751" y2="368"/><line x1="1774" y1="177" x2="1774" y2="368"/><line x1="1796" y1="177" x2="1796" y2="368"/><line x1="1818" y1="177" x2="1818" y2="368"/><line x1="1840" y1="177" x2="1840" y2="368"/><line x1="1862" y1="177" x2="1862" y2="368"/>
</g>
<g font-size="3.6" fill="#ccd"><text x="1655" y="179">10</text><text x="1657" y="218">8</text><text x="1657" y="255">6</text><text x="1657" y="294">4</text><text x="1657" y="332">2</text><text x="1657" y="370">0</text></g>
<g font-size="3.6" fill="#ccd" text-anchor="middle"><text x="1663" y="376">0</text><text x="1685" y="376">50</text><text x="1707" y="376">100</text><text x="1729" y="376">150</text><text x="1751" y="376">200</text><text x="1774" y="376">250</text><text x="1796" y="376">300</text><text x="1818" y="376">350</text><text x="1840" y="376">400</text><text x="1862" y="376">450</text></g>
<text x="1765" y="383" font-size="3.8" fill="#ccd" text-anchor="middle">OVERTAKEN_POSITIONS_TOTAL</text>
<text x="1650" y="275" font-size="3.6" fill="#ccd" transform="rotate(-90 1650 275)">SCORE</text>
<path d="M1663 248 L1857 190 L1857 212 L1663 268 Z" fill="#8a9aaa" opacity="0.3"/>
<line x1="1663" y1="258" x2="1857" y2="201" stroke="#ccc" stroke-width="0.6" stroke-dasharray="1 1"/>
<g fill="#3fb7b7" opacity="0.8">
<circle cx="1703" cy="201" r="2.6"/><circle cx="1710" cy="195" r="2.6"/><circle cx="1716" cy="203" r="2.6"/><circle cx="1722" cy="197" r="2.6"/><circle cx="1728" cy="206" r="2.6"/><circle cx="1720" cy="212" r="2.6"/><circle cx="1712" cy="210" r="2.6"/><circle cx="1705" cy="216" r="2.6"/><circle cx="1700" cy="210" r="2.6"/><circle cx="1734" cy="212" r="2.6"/><circle cx="1740" cy="199" r="2.6"/><circle cx="1746" cy="206" r="2.6"/><circle cx="1752" cy="213" r="2.6"/><circle cx="1757" cy="220" r="2.6"/><circle cx="1745" cy="224" r="2.6"/><circle cx="1738" cy="218" r="2.6"/><circle cx="1727" cy="220" r="2.6"/><circle cx="1718" cy="224" r="2.6"/><circle cx="1710" cy="228" r="2.6"/><circle cx="1700" cy="225" r="2.6"/><circle cx="1735" cy="193" r="2.6"/><circle cx="1745" cy="191" r="2.6"/><circle cx="1756" cy="200" r="2.6"/><circle cx="1763" cy="208" r="2.6"/><circle cx="1726" cy="229" r="2.6"/><circle cx="1716" cy="235" r="2.6"/><circle cx="1693" cy="232" r="2.6"/><circle cx="1704" cy="240" r="2.6"/><circle cx="1680" cy="246" r="2.6"/><circle cx="1733" cy="232" r="2.6"/><circle cx="1751" cy="228" r="2.6"/><circle cx="1722" cy="190" r="2.6"/>
</g>
<g fill="#e08a12" opacity="0.85">
<circle cx="1688" cy="262" r="2.6"/><circle cx="1695" cy="258" r="2.6"/><circle cx="1702" cy="264" r="2.6"/><circle cx="1709" cy="260" r="2.6"/><circle cx="1716" cy="266" r="2.6"/><circle cx="1722" cy="261" r="2.6"/><circle cx="1727" cy="268" r="2.6"/><circle cx="1735" cy="270" r="2.6"/><circle cx="1708" cy="272" r="2.6"/><circle cx="1699" cy="275" r="2.6"/><circle cx="1690" cy="270" r="2.6"/><circle cx="1684" cy="278" r="2.6"/><circle cx="1694" cy="284" r="2.6"/><circle cx="1704" cy="281" r="2.6"/><circle cx="1714" cy="277" r="2.6"/><circle cx="1720" cy="282" r="2.6"/><circle cx="1706" cy="290" r="2.6"/><circle cx="1698" cy="294" r="2.6"/><circle cx="1700" cy="303" r="2.6"/><circle cx="1692" cy="299" r="2.6"/><circle cx="1699" cy="311" r="2.6"/><circle cx="1734" cy="285" r="2.6"/><circle cx="1746" cy="281" r="2.6"/><circle cx="1676" cy="276" r="2.6"/>
</g>
<g fill="#6d5a45" opacity="0.7"><circle cx="1744" cy="248" r="2.6"/><circle cx="1753" cy="244" r="2.6"/><circle cx="1760" cy="256" r="2.6"/><circle cx="1770" cy="250" r="2.6"/><circle cx="1778" cy="245" r="2.6"/><circle cx="1740" cy="262" r="2.6"/><circle cx="1771" cy="278" r="2.6"/></g>
<g fill="#9bc77b" opacity="0.85">
<circle cx="1772" cy="195" r="2.6"/><circle cx="1778" cy="188" r="2.6"/><circle cx="1788" cy="192" r="2.6"/><circle cx="1789" cy="200" r="2.6"/><circle cx="1771" cy="203" r="2.6"/><circle cx="1796" cy="212" r="2.6"/><circle cx="1803" cy="213" r="2.6"/><circle cx="1790" cy="221" r="2.6"/><circle cx="1775" cy="220" r="2.6"/><circle cx="1785" cy="228" r="2.6"/><circle cx="1793" cy="229" r="2.6"/><circle cx="1805" cy="226" r="2.6"/><circle cx="1812" cy="200" r="2.6"/><circle cx="1825" cy="203" r="2.6"/><circle cx="1826" cy="187" r="2.6"/><circle cx="1820" cy="219" r="2.6"/><circle cx="1816" cy="228" r="2.6"/><circle cx="1823" cy="230" r="2.6"/><circle cx="1849" cy="193" r="2.6"/><circle cx="1849" cy="219" r="2.6"/><circle cx="1810" cy="237" r="2.6"/><circle cx="1808" cy="255" r="2.6"/><circle cx="1780" cy="252" r="2.6"/></g>
<line x1="1735" y1="177" x2="1735" y2="368" stroke="#d8d8d8" stroke-width="1.6"/>
<line x1="1663" y1="240" x2="1862" y2="240" stroke="#fff" stroke-width="1.8" stroke-dasharray="2 0.7"/>
<g font-size="3.6" fill="#ccd">
<text x="1676" y="395">Clusters</text>
<rect x="1690" y="391" width="2" height="4" fill="#3aa7a7"/><text x="1694" y="395">Cluster 1</text>
<rect x="1718" y="391" width="2" height="4" fill="#d9891e"/><text x="1722" y="395">Cluster 2</text>
<rect x="1744" y="391" width="2" height="4" fill="#5cc2d2"/><text x="1748" y="395">Cluster 3</text>
<rect x="1770" y="391" width="2" height="4" fill="#7a5a3a"/><text x="1774" y="395">Cluster 4</text>
<rect x="1796" y="391" width="2" height="4" fill="#9bc77b"/><text x="1800" y="395">Cluster 5</text>
<text x="1665" y="408">-- Trend (95% Confidence)   -- Median SCORE   -- Average OVERTAKEN_POSITIONS_TOTAL</text>
</g>
<rect x="944" y="439" width="930" height="13" fill="#fff"/>
<g font-size="5" fill="#444">
<text x="947" y="448" font-weight="bold" fill="#222">Overview</text><line x1="947" y1="450" x2="966" y2="450" stroke="#222" stroke-width="0.8"/>
<text x="983" y="448">Influencers</text><text x="1020" y="448">Correlation</text><text x="1057" y="448">Top Score Overtaking</text><text x="1117" y="448">Bottom Score Overtaking</text><text x="1186" y="448">Abu Dhabi Grand Prix</text><text x="1246" y="448">Top &amp; Bottom Over...</text><text x="1317" y="448">Delta to Ghost Car</text><text x="1370" y="448">Score Prediction</text>
</g>
</svg>
</body></html>
